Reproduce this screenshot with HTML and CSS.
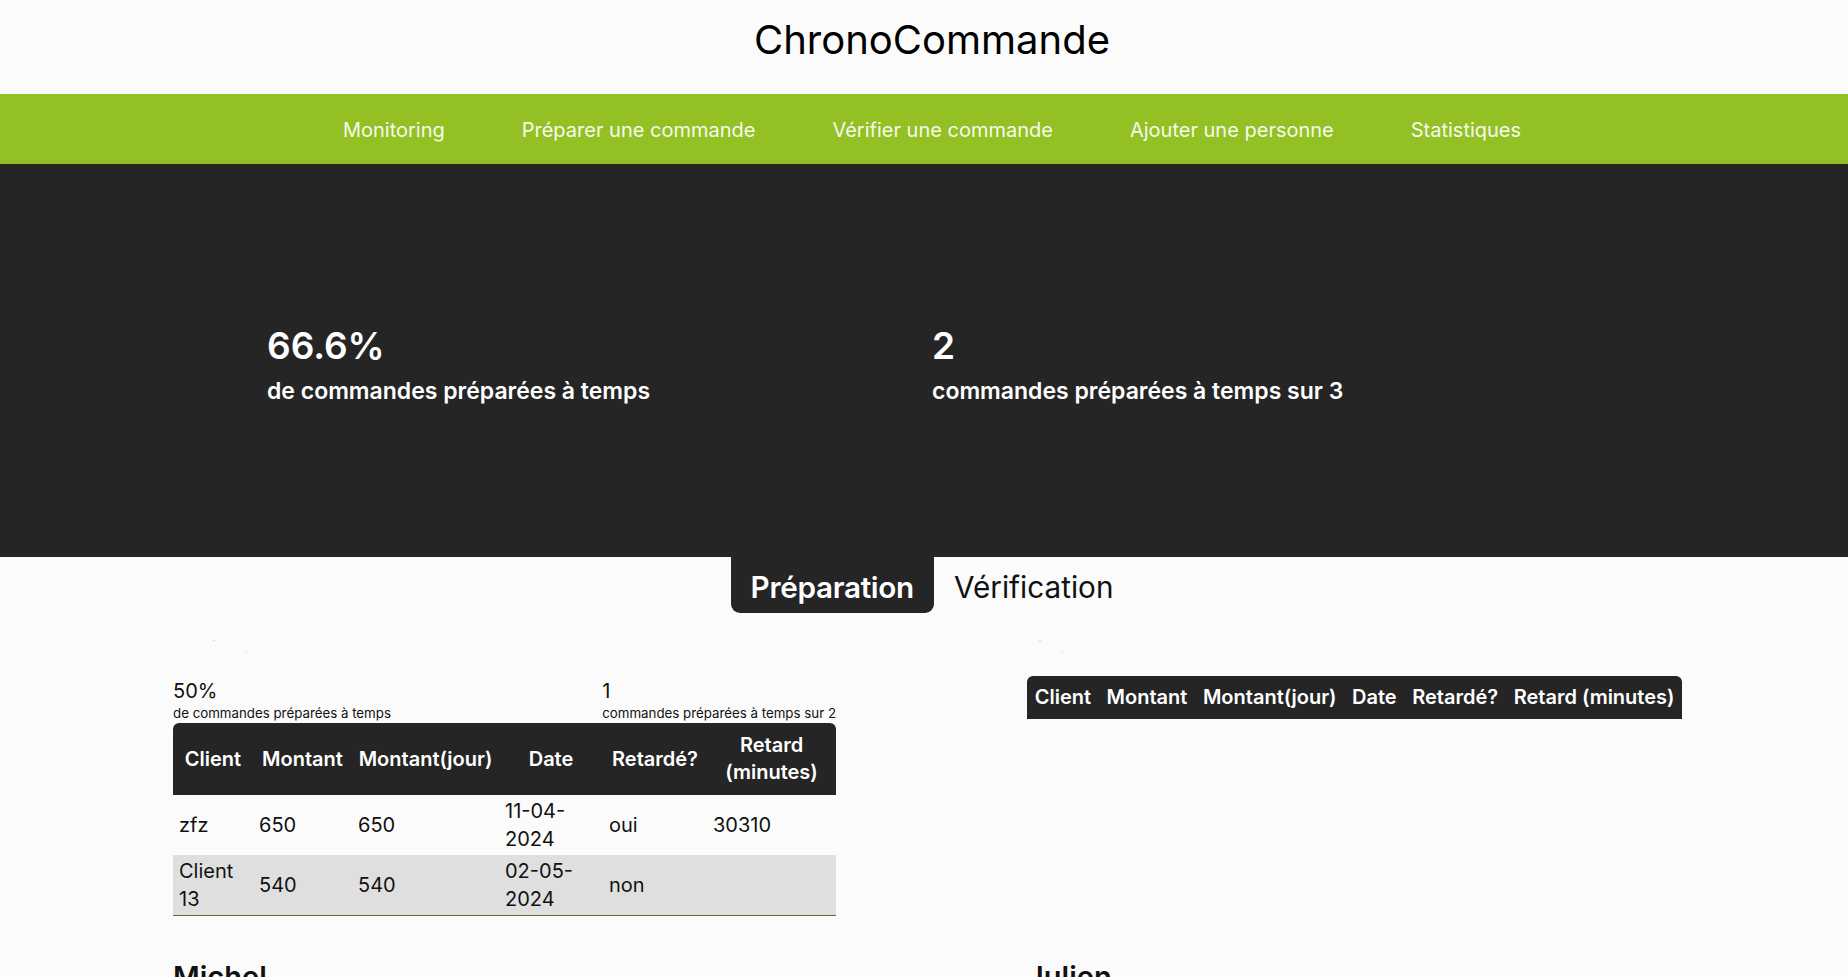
FILE: index.html
```html
<!DOCTYPE html>
<html lang="fr">
<head>
<meta charset="utf-8">
<title>ChronoCommande</title>
<link rel="stylesheet" href="styles.css">
</head>
<body>
<header class="site-header">
  <h1 class="site-title">ChronoCommande</h1>
</header>
<nav class="main-nav">
  <a class="nav-link" href="#">Monitoring</a>
  <a class="nav-link" href="#">Préparer une commande</a>
  <a class="nav-link" href="#">Vérifier une commande</a>
  <a class="nav-link" href="#">Ajouter une personne</a>
  <a class="nav-link" href="#">Statistiques</a>
</nav>
<section class="hero">
  <div class="hero-stats">
    <div class="hero-stat">
      <div class="hero-value">66.6%</div>
      <div class="hero-label">de commandes préparées à temps</div>
    </div>
    <div class="hero-stat">
      <div class="hero-value">2</div>
      <div class="hero-label">commandes préparées à temps sur 3</div>
    </div>
  </div>
</section>
<div class="tabs">
  <button class="tab tab-active">Préparation</button>
  <button class="tab">Vérification</button>
</div>
<main class="panels">
  <div class="panel">
    <div class="specks"><span class="speck"></span><span class="speck speck-b"></span></div>
    <div class="mini-stats">
      <div class="mini-stat">
        <div class="mini-value">50%</div>
        <div class="mini-label">de commandes préparées à temps</div>
      </div>
      <div class="mini-stat">
        <div class="mini-value">1</div>
        <div class="mini-label">commandes préparées à temps sur 2</div>
      </div>
    </div>
    <table class="orders orders-fixed">
      <colgroup>
        <col class="c1"><col class="c2"><col class="c3"><col class="c4"><col class="c5"><col class="c6">
      </colgroup>
      <thead>
        <tr><th>Client</th><th>Montant</th><th>Montant(jour)</th><th>Date</th><th>Retardé?</th><th>Retard (minutes)</th></tr>
      </thead>
      <tbody>
        <tr><td>zfz</td><td>650</td><td>650</td><td>11-04-2024</td><td>oui</td><td>30310</td></tr>
        <tr class="row-alt"><td>Client 13</td><td>540</td><td>540</td><td>02-05-2024</td><td>non</td><td></td></tr>
      </tbody>
    </table>
  </div>
  <div class="panel panel-right">
    <div class="specks specks-right"><span class="speck"></span><span class="speck speck-b"></span></div>
    <table class="orders orders-auto">
      <thead>
        <tr><th>Client</th><th>Montant</th><th>Montant(jour)</th><th>Date</th><th>Retardé?</th><th>Retard (minutes)</th></tr>
      </thead>
      <tbody></tbody>
    </table>
  </div>
  <h2 class="person">Michel</h2>
  <h2 class="person person-right">Julien</h2>
</main>
</body>
</html>
```
FILE: styles.css
```css
* { box-sizing: border-box; }
html, body { margin: 0; padding: 0; }
body {
  background: #fbfbfb;
  font-family: Inter, "Noto Sans", sans-serif;
  color: #111;
}
.site-header {
  height: 94px;
  padding: 16px 0 0 16px;
  display: flex;
  justify-content: center;
}
.site-title {
  margin: 0;
  font-size: 40px;
  line-height: 48px;
  font-weight: 400;
  color: #000;
}
.main-nav {
  height: 70px;
  background: #93c123;
  display: flex;
  justify-content: center;
  align-items: center;
  gap: 77px;
  padding: 2px 0 0 16px;
}
.nav-link {
  color: #f6f9ee;
  text-decoration: none;
  font-size: 20px;
  line-height: 24px;
}
.hero {
  height: 393px;
  background: #252525;
  padding-top: 158px;
}
.hero-stats {
  display: grid;
  grid-template-columns: 665px 1fr;
  padding-left: 267px;
  color: #fff;
}
.hero-value {
  font-size: 37px;
  line-height: 48px;
  font-weight: 600;
}
.hero-label {
  margin-top: 7px;
  font-size: 23px;
  line-height: 28px;
  font-weight: 600;
}
.tabs {
  display: flex;
  justify-content: center;
  padding-left: 16px;
  height: 56px;
}
.tab {
  border: 0;
  background: transparent;
  font-family: inherit;
  font-size: 29.7px;
  line-height: 56px;
  padding: 2px 20px 0;
  color: #111;
  font-weight: 400;
}
.tab-active {
  background: #252525;
  color: #fff;
  font-weight: 600;
  letter-spacing: -0.3px;
  border-radius: 0 0 9px 9px;
}
.panels {
  display: grid;
  grid-template-columns: 854px 1fr;
  padding-left: 173px;
  row-gap: 43px;
}
.panel { padding-top: 27px; }
.specks { height: 36px; display: flex; gap: 30px; padding-left: 40px; }
.specks-right { height: 36px; padding-left: 12px; gap: 20px; }
.speck { width: 2px; height: 1px; background: #d8d8d8; }
.speck-b { margin-top: 12px; }
.mini-stats {
  width: 663px;
  display: flex;
  justify-content: space-between;
  padding-top: 3px;
}
.mini-value {
  font-size: 20px;
  line-height: 24px;
}
.mini-label {
  font-size: 13.3px;
  line-height: 20px;
}
.orders {
  border-collapse: separate;
  border-spacing: 0;
  font-size: 20px;
}
.orders th {
  background: #252525;
  color: #fff;
  font-weight: 600;
  line-height: 27px;
  padding: 9px 6px;
  text-align: center;
}
.orders th:first-child { border-top-left-radius: 6px; }
.orders th:last-child { border-top-right-radius: 6px; }
.orders td {
  padding: 2px 6px;
  line-height: 28px;
  vertical-align: middle;
  text-align: left;
}
.orders-fixed {
  table-layout: fixed;
  width: 663px;
}
.c1 { width: 80px; }
.c2 { width: 99px; }
.c3 { width: 147px; }
.c4 { width: 104px; }
.c5 { width: 104px; }
.c6 { width: 129px; }
.row-alt td {
  background: #e0dfdf;
  border-bottom: 1px solid #5f6f2e;
}
.orders-auto th {
  white-space: nowrap;
  padding: 8px 7.75px;
}
.person {
  margin: 0;
  font-size: 29px;
  line-height: 35px;
  font-weight: 600;
}
```
